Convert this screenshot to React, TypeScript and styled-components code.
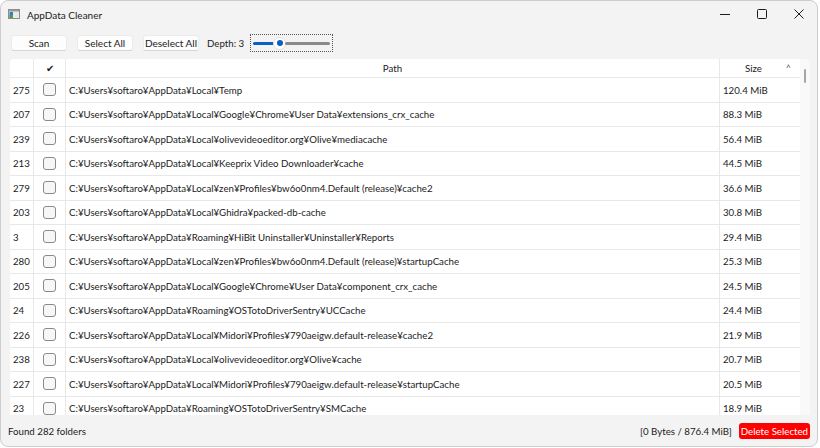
import { Fragment } from 'react';
import styled, { createGlobalStyle } from 'styled-components';

const Global = createGlobalStyle`
  html, body { margin: 0; padding: 0; background: #ffffff; }
  body { font-family: Lato, "Noto Sans", "Noto Sans CJK JP", sans-serif; font-size: 9.7px; color: #1b1b1b; }
`;

const Win = styled.div`
  width: 818px; height: 447px; box-sizing: border-box;
  border: 1px solid #cdcdcd; border-radius: 8px; overflow: hidden;
  background: #f3f3f3; display: flex; flex-direction: column;
`;

const TitleBar = styled.div`
  height: 26px; flex-shrink: 0; display: flex; align-items: center;
  padding-left: 7px;
`;

const TitleText = styled.div`font-size: 10px; margin-left: 7px; flex: 1; padding-top: 1px;`;

const WinBtn = styled.div`
  width: 37px; height: 26px; display: flex; align-items: center; justify-content: center;
`;

const Toolbar = styled.div`
  height: 32px; flex-shrink: 0; display: flex; align-items: center; gap: 10px;
  padding: 0 0 0 10px;
`;

const Button = styled.button<{ w: number }>`
  width: ${p => p.w}px; height: 16px; padding: 0; white-space: nowrap;
  background: #fdfdfd; border: 1px solid #ececec; border-bottom-color: #d6d6d6;
  border-radius: 3px; font: inherit; font-size: 10px; color: #1b1b1b;
  display: flex; align-items: center; justify-content: center;
`;

const DepthLabel = styled.div`margin-left: -2px; font-size: 9.7px; white-space: nowrap;`;

const SliderBox = styled.div`
  box-sizing: border-box; width: 83px; height: 18px; margin-left: -4px; border: 1px dotted #555;
  display: flex; align-items: center; padding: 0 2px;
`;

const Track = styled.div<{ color: string; w: number }>`
  height: 3px; width: ${p => p.w}px; background: ${p => p.color}; border-radius: 2px;
`;

const Thumb = styled.div`
  width: 11px; height: 11px; border-radius: 50%; background: #fff; flex-shrink: 0;
  box-shadow: 0 0 0 1px #e0e0e0; display: flex; align-items: center; justify-content: center;
  &::after { content: ''; width: 6px; height: 6px; border-radius: 50%; background: #0a5fc4; }
`;

const TableFrame = styled.div`
  flex: 1; display: flex; margin: 0 7px 0 9px; overflow: hidden;
  background: #f9f9f9; border-top-left-radius: 4px; border-top-right-radius: 4px;
`;

const Table = styled.div`
  flex: 1; overflow: hidden; background: #ffffff;
  display: grid; grid-template-columns: 23px 32px 1fr 81px; grid-auto-rows: 24.5px;
  grid-template-rows: 19px;
`;

const Cell = styled.div<{ center?: boolean }>`
  display: flex; align-items: center; padding: 0 3px; white-space: nowrap; overflow: hidden;
  justify-content: ${p => (p.center ? 'center' : 'flex-start')};
  border-bottom: 1px solid #e8e8e8;
  border-left: 1px solid #e8e8e8;
  &:nth-child(4n+1) { border-left: none; }
  font-size: 9.7px;
`;

const HeadSize = styled(Cell)`
  position: relative; justify-content: center; padding-right: 16px;
`;

const SortArrow = styled.span`
  position: absolute; right: 9px; top: 3px; font-size: 9px; color: #555;
`;

const Check = styled.div`
  width: 11px; height: 11px; border: 1px solid #8a8a8a; border-radius: 3px; background: #f7f7f7;
`;

const ScrollBar = styled.div`
  width: 10px; flex-shrink: 0; display: flex; justify-content: center; padding-top: 10px;
`;

const ScrollThumb = styled.div`width: 2px; height: 14px; background: #a4a4a4; border-radius: 1px;`;

const Status = styled.div`
  height: 31px; flex-shrink: 0; display: flex; align-items: center; padding: 0 7px 0 7px; gap: 7px;
  font-size: 9.7px;
`;

const StatusLeft = styled.div`flex: 1;`;

const DeleteBtn = styled.button`
  height: 16px; padding: 0 2px; border: none; border-radius: 3px; background: #ff0000; color: #fff;
  font: inherit; font-size: 9.7px; display: flex; align-items: center;
`;

const rows: [string, string, string][] = [
  ['275', 'C:¥Users¥softaro¥AppData¥Local¥Temp', '120.4 MiB'],
  ['207', 'C:¥Users¥softaro¥AppData¥Local¥Google¥Chrome¥User Data¥extensions_crx_cache', '88.3 MiB'],
  ['239', 'C:¥Users¥softaro¥AppData¥Local¥olivevideoeditor.org¥Olive¥mediacache', '56.4 MiB'],
  ['213', 'C:¥Users¥softaro¥AppData¥Local¥Keeprix Video Downloader¥cache', '44.5 MiB'],
  ['279', 'C:¥Users¥softaro¥AppData¥Local¥zen¥Profiles¥bw6o0nm4.Default (release)¥cache2', '36.6 MiB'],
  ['203', 'C:¥Users¥softaro¥AppData¥Local¥Ghidra¥packed-db-cache', '30.8 MiB'],
  ['3', 'C:¥Users¥softaro¥AppData¥Roaming¥HiBit Uninstaller¥Uninstaller¥Reports', '29.4 MiB'],
  ['280', 'C:¥Users¥softaro¥AppData¥Local¥zen¥Profiles¥bw6o0nm4.Default (release)¥startupCache', '25.3 MiB'],
  ['205', 'C:¥Users¥softaro¥AppData¥Local¥Google¥Chrome¥User Data¥component_crx_cache', '24.5 MiB'],
  ['24', 'C:¥Users¥softaro¥AppData¥Roaming¥OSTotoDriverSentry¥UCCache', '24.4 MiB'],
  ['226', 'C:¥Users¥softaro¥AppData¥Local¥Midori¥Profiles¥790aeigw.default-release¥cache2', '21.9 MiB'],
  ['238', 'C:¥Users¥softaro¥AppData¥Local¥olivevideoeditor.org¥Olive¥cache', '20.7 MiB'],
  ['227', 'C:¥Users¥softaro¥AppData¥Local¥Midori¥Profiles¥790aeigw.default-release¥startupCache', '20.5 MiB'],
  ['23', 'C:¥Users¥softaro¥AppData¥Roaming¥OSTotoDriverSentry¥SMCache', '18.9 MiB'],
];

const AppIcon = () => (
  <svg width="12" height="10" viewBox="0 0 12 10">
    <rect x="0.5" y="0.5" width="11" height="9" fill="#e9e9e9" stroke="#8c8c8c" />
    <rect x="1" y="1" width="10" height="1.5" fill="#9a9a9a" />
    <rect x="1.5" y="3" width="3.5" height="6" fill="#3a78c4" />
    <rect x="1.5" y="6" width="3.5" height="3" fill="#4aa04a" />
  </svg>
);

export default function App() {
  return (
    <>
      <Global />
      <Win>
        <TitleBar>
          <AppIcon />
          <TitleText>AppData Cleaner</TitleText>
          <WinBtn>
            <svg width="10" height="10" viewBox="0 0 10 10"><path d="M0 5.5h10" stroke="#1b1b1b" strokeWidth="1" /></svg>
          </WinBtn>
          <WinBtn>
            <svg width="10" height="10" viewBox="0 0 10 10"><rect x="0.5" y="0.5" width="9" height="9" rx="1" fill="none" stroke="#1b1b1b" /></svg>
          </WinBtn>
          <WinBtn>
            <svg width="10" height="10" viewBox="0 0 10 10"><path d="M0.5 0.5l9 9M9.5 0.5l-9 9" stroke="#1b1b1b" strokeWidth="1" /></svg>
          </WinBtn>
        </TitleBar>
        <Toolbar>
          <Button w={56}>Scan</Button>
          <Button w={56}>Select All</Button>
          <Button w={56}>Deselect All</Button>
          <DepthLabel>Depth: 3</DepthLabel>
          <SliderBox>
            <Track color="#0a5fc4" w={21} />
            <Thumb />
            <Track color="#8a8a8a" w={45} />
          </SliderBox>
        </Toolbar>
        <TableFrame>
          <Table>
            <Cell />
            <Cell center>✔</Cell>
            <Cell center>Path</Cell>
            <HeadSize>Size<SortArrow>^</SortArrow></HeadSize>
            {rows.map(([n, path, size]) => (
              <Fragment key={n}>
                <Cell>{n}</Cell>
                <Cell center><Check /></Cell>
                <Cell>{path}</Cell>
                <Cell>{size}</Cell>
              </Fragment>
            ))}
          </Table>
          <ScrollBar><ScrollThumb /></ScrollBar>
        </TableFrame>
        <Status>
          <StatusLeft>Found 282 folders</StatusLeft>
          <div>[0 Bytes / 876.4 MiB]</div>
          <DeleteBtn>Delete Selected</DeleteBtn>
        </Status>
      </Win>
    </>
  );
}
